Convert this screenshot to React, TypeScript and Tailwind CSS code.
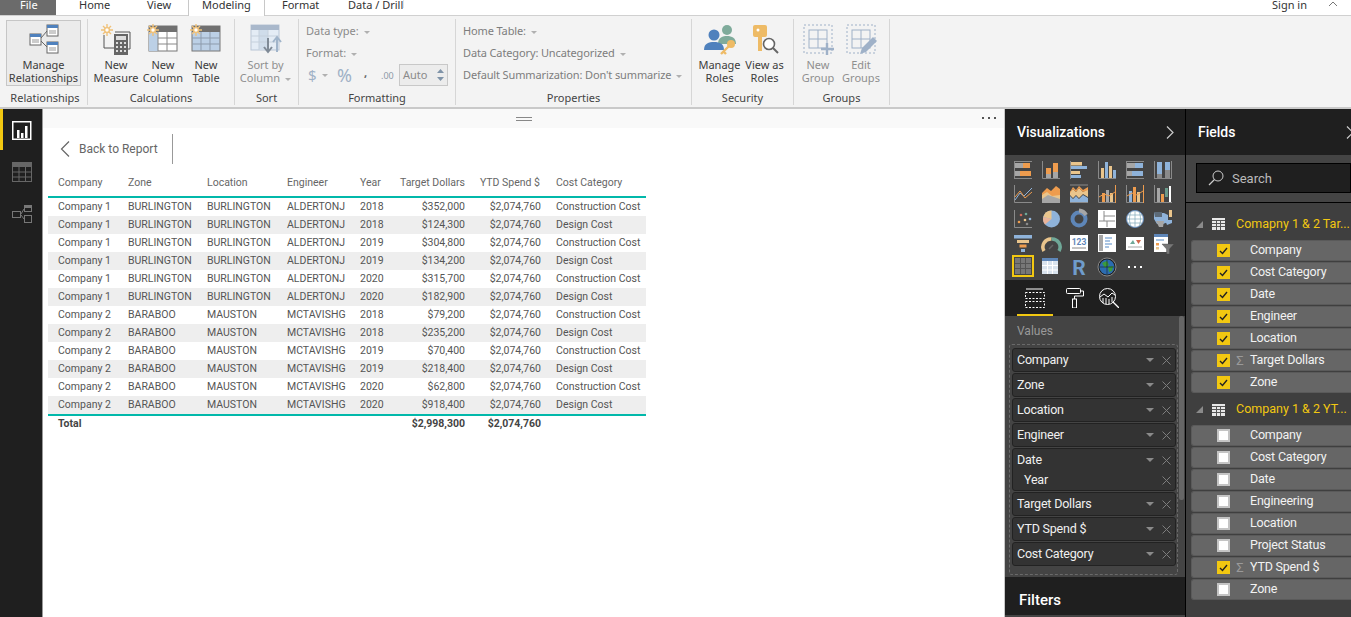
import React from "react";

const sans = "font-['Noto_Sans','Open_Sans',sans-serif]";
const din = "font-['Roboto','Noto_Sans',sans-serif]";

type Row = [string, string, string, string, string, string, string];
const rows: Row[] = [
  ["Company 1", "BURLINGTON", "BURLINGTON", "ALDERTONJ", "2018", "$352,000", "Construction Cost"],
  ["Company 1", "BURLINGTON", "BURLINGTON", "ALDERTONJ", "2018", "$124,300", "Design Cost"],
  ["Company 1", "BURLINGTON", "BURLINGTON", "ALDERTONJ", "2019", "$304,800", "Construction Cost"],
  ["Company 1", "BURLINGTON", "BURLINGTON", "ALDERTONJ", "2019", "$134,200", "Design Cost"],
  ["Company 1", "BURLINGTON", "BURLINGTON", "ALDERTONJ", "2020", "$315,700", "Construction Cost"],
  ["Company 1", "BURLINGTON", "BURLINGTON", "ALDERTONJ", "2020", "$182,900", "Design Cost"],
  ["Company 2", "BARABOO", "MAUSTON", "MCTAVISHG", "2018", "$79,200", "Construction Cost"],
  ["Company 2", "BARABOO", "MAUSTON", "MCTAVISHG", "2018", "$235,200", "Design Cost"],
  ["Company 2", "BARABOO", "MAUSTON", "MCTAVISHG", "2019", "$70,400", "Construction Cost"],
  ["Company 2", "BARABOO", "MAUSTON", "MCTAVISHG", "2019", "$218,400", "Design Cost"],
  ["Company 2", "BARABOO", "MAUSTON", "MCTAVISHG", "2020", "$62,800", "Construction Cost"],
  ["Company 2", "BARABOO", "MAUSTON", "MCTAVISHG", "2020", "$918,400", "Design Cost"],
];

const gridCols = "grid grid-cols-[80px_79px_80px_73px_30px_75px_76px_105px]";

const O = "#ee9c4e", B = "#8fb3da", T = "#eac58c", G = "#a6a6a6", L = "#8a8a8a", W = "#ffffff", D = "#5e86b8";

const Axis = () => <path d="M.5 0V17.5H18" fill="none" stroke={L} />;

const vizIcons: React.ReactNode[] = [
  <><path d="M.5 0V18M0 .5H18M0 17.5H18" stroke={L} fill="none"/><rect x="1" y="2" width="8" height="5" fill={G}/><rect x="9" y="2" width="7" height="5" fill={O}/><rect x="1" y="10" width="5" height="5" fill={G}/><rect x="6" y="10" width="11" height="5" fill={O}/></>,
  <><Axis/><rect x="4" y="7" width="5" height="6" fill={O}/><rect x="4" y="13" width="5" height="4" fill={G}/><rect x="11" y="2" width="5" height="9" fill={O}/><rect x="11" y="11" width="5" height="6" fill={G}/></>,
  <><path d="M.5 0V18" stroke={L}/><rect x="1" y="1" width="11" height="3.5" fill={T}/><rect x="1" y="5" width="16" height="3" fill={B}/><rect x="1" y="10" width="9" height="3" fill={T}/><rect x="1" y="14" width="10" height="3" fill={B}/></>,
  <><Axis/><rect x="3" y="7" width="3" height="10" fill={T}/><rect x="7" y="1" width="3" height="16" fill={B}/><rect x="11" y="5" width="3" height="12" fill={T}/><rect x="15" y="9" width="3" height="8" fill={B}/></>,
  <><path d="M.5 0V18M0 17.5H18M0 .5H18" stroke={L} fill="none"/><rect x="1" y="2" width="8" height="5" fill={G}/><rect x="9" y="2" width="8" height="5" fill={B}/><rect x="1" y="10" width="5" height="5" fill={G}/><rect x="6" y="10" width="11" height="5" fill={B}/></>,
  <><path d="M.5 0V18M0 17.5H18M17.5 0V18" stroke={L} fill="none"/><rect x="3" y="1" width="5" height="12" fill={B}/><rect x="3" y="13" width="5" height="4" fill={L}/><rect x="11" y="1" width="5" height="8" fill={B}/><rect x="11" y="9" width="5" height="8" fill={L}/></>,

  <><Axis/><path d="M1 15L6 8L10 11L18 3" fill="none" stroke={B}/><path d="M1 12L6 6L11 13L18 7" fill="none" stroke={O}/></>,
  <><path d="M0 8L5 3L9 6L14 1L18 4V18H0Z" fill={O}/><path d="M0 10L5 7L10 11L18 10V18H0Z" fill={T}/><path d="M0 14L6 10L18 14V18H0Z" fill={G}/></>,
  <><path d="M0 0H18" stroke={L}/><path d="M0 7L3 4L6 7L9 3L13 7L18 4V12L13 9L9 13L6 10L3 13L0 10Z" fill={T}/><path d="M0 11L3 14L6 11L9 14L13 10L18 13V18H0Z" fill={B}/><path d="M0 7L3 2L6 5L9 1L13 5L18 2V5L13 7L9 3L6 7L3 4L0 8Z" fill={O}/><path d="M0 17.5H18" stroke={L}/></>,
  <><Axis/><rect x="4" y="8" width="3" height="9" fill={O}/><rect x="8" y="5" width="3" height="12" fill={G}/><rect x="12" y="8" width="3" height="9" fill={T}/><path d="M17.5 0V18" stroke={O}/><path d="M1 12L6 9L11 11L17 7" fill="none" stroke={O}/></>,
  <><Axis/><rect x="3" y="6" width="3" height="11" fill={B}/><rect x="7" y="2" width="3" height="15" fill={O}/><rect x="11" y="7" width="3" height="10" fill={T}/><path d="M17.5 0V18" stroke={O}/><path d="M1 11L6 8L11 10L17 6" fill="none" stroke={O}/></>,
  <><Axis/><rect x="3" y="3" width="3" height="14" fill={G}/><rect x="7" y="9" width="3" height="8" fill={O}/><rect x="11" y="3" width="3" height="9" fill="#6a9a8a"/><rect x="15" y="1" width="2" height="16" fill={W}/></>,

  <><Axis/><circle cx="5" cy="12" r="1.3" fill={O}/><circle cx="7" cy="5" r="1.3" fill="#d06a5a"/><circle cx="12" cy="4" r="1.3" fill="#6fa898"/><circle cx="11" cy="10" r="1.3" fill={T}/><circle cx="16" cy="9" r="1.3" fill={B}/><circle cx="13" cy="14" r="1.3" fill={L}/></>,
  <><circle cx="9.5" cy="9" r="8.5" fill={B}/><path d="M9.5 9V.5A8.5 8.5 0 0 0 1.3 7Z" fill={T}/><path d="M9.5 9L1.3 7A8.5 8.5 0 0 0 3 14.5Z" fill="#eab49a"/></>,
  <><circle cx="9" cy="9" r="6.5" fill="none" stroke={D} strokeWidth="4"/><path d="M9 .5A8.5 8.5 0 0 1 16 5" fill="none" stroke={G} strokeWidth="4"/></>,
  <><rect x="0" y="0" width="18" height="18" fill={W}/><path d="M1 11H17M6 1V11M9 17V11M6 6H17" stroke={L} fill="none"/></>,
  <><circle cx="9" cy="9" r="8.5" fill={W} stroke={D}/><path d="M.5 9H17.5M2 5H16M2 13H16M9 .5V17.5M5 2C3 6 3 12 5 16M13 2C15 6 15 12 13 16" stroke="#7fa8b8" fill="none" strokeWidth=".7"/></>,
  <><path d="M0 3H10L14 5V12L9 14H3L0 9Z" fill={B}/><path d="M0 2H8V7H1Z" fill="#5c6a78"/><path d="M2 11H10L9 17H5Z" fill={G}/><path d="M11 10H18V13L13 15Z" fill={B}/><rect x="15" y="0" width="3" height="7" fill={T}/></>,

  <><rect x="0" y="1" width="18" height="3.5" fill={B}/><rect x="3" y="6" width="12" height="3" fill={T}/><rect x="5.5" y="10.5" width="7" height="3" fill={O}/><rect x="7" y="15" width="4" height="3" fill={B}/></>,
  <><path d="M2 17A8 8 0 0 1 9.5 5" fill="none" stroke={T} strokeWidth="3.5"/><path d="M9.5 5A8 8 0 0 1 17 17" fill="none" stroke="#6fa898" strokeWidth="3.5"/><path d="M7 15L11 11" stroke="#666" strokeWidth="1.5"/></>,
  <><rect x="0" y="1" width="18" height="16" fill={W}/><text x="9" y="11" textAnchor="middle" fontSize="8.5" fontFamily="Roboto" fontWeight="700" fill={D}>123</text><path d="M2 14H16" stroke={L}/></>,
  <><rect x="0" y="0" width="18" height="18" fill={W}/><rect x="1" y="1" width="4" height="16" fill={G}/><path d="M7 4H14M7 7H12M7 10H14M7 13H11" stroke={B} strokeWidth="1.3"/></>,
  <><rect x="0" y="3" width="18" height="13" fill={W}/><path d="M4 10L7 6L9 10Z" fill="#6fa898"/><path d="M10 6H15L12.5 10Z" fill="#d0664a"/><path d="M2 13H16" stroke={G}/></>,
  <><rect x="0" y="0" width="14" height="18" fill={W}/><rect x="0" y="0" width="14" height="3" fill={D}/><path d="M2 6H10" stroke={B} strokeWidth="1.5"/><rect x="2" y="9" width="3" height="2.5" fill={O}/><rect x="2" y="13" width="3" height="2.5" fill={T}/><path d="M8 10H20L15.5 15V20H12.5V15Z" fill="#777" stroke="#444" strokeWidth=".4"/></>,

  <><rect x="0" y="0" width="18" height="18" fill="#444"/><rect x="1" y="1" width="16" height="16" fill="#777"/><path d="M6.5 1V17M11.5 1V17M1 6.5H17M1 11.5H17" stroke="#555"/></>,
  <><rect x="0" y="0" width="16" height="16" fill="#d9e3ee"/><rect x="0" y="0" width="16" height="3" fill={D}/><path d="M5.5 3V16M10.5 3V16M0 7.5H16M0 12H16" stroke={W}/></>,
  <text x="9" y="17" textAnchor="middle" fontSize="21" fontFamily="Roboto" fontWeight="700" fill="#6f9ccb">R</text>,
  <><circle cx="9" cy="9" r="9" fill="#1f1f1f" stroke="#888"/><circle cx="9" cy="9" r="7.5" fill="#2c6cb0"/><path d="M4 5L9 3L11 7L7 10Z" fill="#3a9b3e"/><path d="M10 9L15 8L14 13L11 14Z" fill="#3a9b3e"/><path d="M2 9H16M9 2V16" stroke="#111" strokeWidth=".5"/></>,
  <><rect x="2" y="8" width="2" height="2" fill={W}/><rect x="8" y="8" width="2" height="2" fill={W}/><rect x="14" y="8" width="2" height="2" fill={W}/></>,
];

function Caret({ color = "#b0b0b0" }: { color?: string }) {
  return <span className="inline-block ml-[5px] w-0 h-0 align-middle border-x-[3px] border-x-transparent border-t-[3px]" style={{ borderTopColor: color }} />;
}

function Sun() {
  return (
    <g stroke="#f0c27a" strokeWidth="1.4">
      <path d="M6 0V12M0 6H12M2 2L10 10M10 2L2 10" />
      <circle cx="6" cy="6" r="2.4" fill="#fff" stroke="#f0c27a" />
    </g>
  );
}

function RibbonBtn({ lines, muted, children, w }: { lines: React.ReactNode[]; muted?: boolean; children: React.ReactNode; w: string }) {
  return (
    <div className={`${w} flex flex-col items-center shrink-0`}>
      <div className="h-[34px] flex items-start justify-center">{children}</div>
      <div className={`text-[11px] leading-[13px] text-center whitespace-nowrap ${muted ? "text-[#8f8f8f]" : "text-[#3c3c3c]"}`}>
        {lines.map((l, i) => <div key={i}>{l}</div>)}
      </div>
    </div>
  );
}

function Section({ w, label, children, className = "" }: { w: string; label: string; children: React.ReactNode; className?: string }) {
  return (
    <div className={`${w} shrink-0 h-[86px] mt-[3px] border-r border-[#d6d6d6] flex flex-col`}>
      <div className={`flex-1 min-h-0 ${className}`}>{children}</div>
      <div className="h-[19px] pt-[5px] text-center text-[11px] leading-[13px] text-[#444]">{label}</div>
    </div>
  );
}

function PillX() {
  return <svg width="9" height="9" viewBox="0 0 9 9" className="mr-[1px] shrink-0"><path d="M.5.5L8.5 8.5M8.5.5L.5 8.5" stroke="#7d7d7d" /></svg>;
}

function Pill({ label, sub }: { label: string; sub?: string }) {
  return (
    <div className={`ml-[2px] mr-[1px] border border-[#222] rounded-[3px] bg-[#333] ${din}`}>
      <div className="h-[22px] pl-[4px] pr-[3px] flex items-center text-[12.5px] tracking-[-0.2px] text-[#f0f0f0]">
        <span className="flex-1">{label}</span>
        <span className="w-0 h-0 border-x-[4px] border-x-transparent border-t-[4px] border-t-[#8a8a8a] mr-[8px]" />
        <PillX />
      </div>
      {sub && (
        <div className="h-[19px] pl-[11px] pr-[3px] flex items-center text-[12.5px] tracking-[-0.2px] text-[#f0f0f0]">
          <span className="flex-1">{sub}</span>
          <PillX />
        </div>
      )}
    </div>
  );
}

function FieldRow({ label, checked, sigma }: { label: string; checked?: boolean; sigma?: boolean }) {
  return (
    <div className={`h-[21px] mb-px ml-[5px] flex items-center rounded-l-[3px] bg-[#666] border border-[#5a5a5a] border-r-0 ${din}`}>
      {checked ? (
        <span className="ml-[25px] w-[13px] h-[13px] bg-[#f2c811] flex items-center justify-center shrink-0">
          <svg width="9" height="8" viewBox="0 0 9 8"><path d="M1 4L3.5 6.5L8 1" fill="none" stroke="#222" strokeWidth="1.4" /></svg>
        </span>
      ) : (
        <span className="ml-[25px] w-[13px] h-[13px] bg-white border-2 border-[#c4c4c4] shrink-0" />
      )}
      <span className="w-[20px] text-center text-[13px] leading-none text-[#9a9a9a] shrink-0">{sigma ? "Σ" : ""}</span>
      <span className="text-[12.5px] tracking-[-0.2px] text-[#f2f2f2] whitespace-nowrap">{label}</span>
    </div>
  );
}

function GroupHead({ label, h }: { label: string; h: string }) {
  return (
    <div className={`${h} flex items-center pl-[10px] ${din}`}>
      <svg width="7" height="7" viewBox="0 0 7 7"><path d="M7 0V7H0Z" fill="#8a8a8a" /></svg>
      <svg width="13" height="12" viewBox="0 0 13 12" className="ml-[9px]">
        <rect width="13" height="12" fill="#e8e8e8" />
        <path d="M4.5 2V12M8.5 2V12M0 2.5H13M0 5.5H13M0 8.5H13" stroke="#555" />
      </svg>
      <span className="ml-[11px] text-[12.5px] text-[#f2c811] whitespace-nowrap">{label}</span>
    </div>
  );
}

export default function App() {
  return (
    <div className={`w-[1351px] h-[617px] overflow-hidden bg-white flex flex-col ${sans}`}>
      {/* Tabs */}
      <div className="h-[15px] shrink-0 flex items-start bg-white text-[11px] leading-[9px] text-[#333] relative whitespace-nowrap">
        <div className="w-[56px] h-[15px] bg-[#6b6b6b] text-white pl-[20px]">File</div>
        <div className="w-[66px] pl-[23px]">Home</div>
        <div className="w-[66px] pl-[25px]">View</div>
        <div className="w-[77px] h-[16px] pl-[13px] border-x border-[#c8c8c8] bg-white relative z-10">Modeling</div>
        <div className="w-[64px] pl-[17px]">Format</div>
        <div className="w-[75px] pl-[19px] border-r border-[#e4e4e4] h-[8px]">Data / Drill</div>
        <div className="flex-1" />
        <div className="pr-[21px]">Sign in</div>
        <svg width="10" height="6" viewBox="0 0 10 6" className="mr-[13px] mt-px"><path d="M1 5L5 1L9 5" fill="none" stroke="#777" /></svg>
      </div>

      {/* Ribbon */}
      <div className="h-[94px] shrink-0 bg-[#f3f3f3] border-t border-[#d0d0d0] border-b-2 border-b-[#c9c9c9] flex pl-[3px]">
        <Section w="w-[85px]" label="Relationships">
          <div className="mx-[3px] mt-px w-[75px] h-[66px] border border-[#c6c6c6] bg-[#ebebeb] flex flex-col items-center text-[11px] leading-[13px] text-[#3c3c3c] pt-[3px]">
            <svg width="30" height="30" viewBox="0 0 30 30" className="mb-[4px]">
              <rect x="18" y="1" width="11" height="11" fill="#fff" stroke="#666"/><rect x="18" y="1" width="11" height="3" fill="#4f81bd"/>
              <rect x="1" y="10" width="11" height="11" fill="#fff" stroke="#666"/><rect x="1" y="10" width="11" height="3" fill="#4f81bd"/>
              <rect x="18" y="18" width="11" height="11" fill="#fff" stroke="#666"/><rect x="18" y="18" width="11" height="3" fill="#4f81bd"/>
              <path d="M12 14L18 7M12 17L18 23" stroke="#666" fill="none"/>
              <path d="M3 16H10M3 18H10M20 7H27M20 9H27M20 24H27M20 26H27" stroke="#999"/>
            </svg>
            <div>Manage</div><div>Relationships</div>
          </div>
        </Section>

        <Section w="w-[147px]" label="Calculations" className="flex pl-[5px] pt-[5px]">
          <RibbonBtn w="w-[46px]" lines={["New", "Measure"]}>
            <svg width="32" height="32" viewBox="0 0 32 32" overflow="visible">
              <path d="M4 11V24H14M15 8H30V25H27" fill="none" stroke="#555"/>
              <rect x="14" y="10" width="14" height="21" fill="#666"/><rect x="16" y="12" width="10" height="4" fill="#ddd"/>
              <path d="M16 19H26M16 23H26M16 27H26" stroke="#ddd" strokeWidth="2" strokeDasharray="2 2"/>
              <g transform="translate(1 0)"><Sun/></g>
            </svg>
          </RibbonBtn>
          <RibbonBtn w="w-[48px]" lines={["New", "Column"]}>
            <svg width="32" height="30" viewBox="0 0 32 30" overflow="visible">
              <rect x="2" y="2" width="28" height="25" fill="#fff" stroke="#777"/>
              <rect x="2" y="2" width="28" height="6" fill="#707070"/>
              <rect x="2" y="8" width="9" height="19" fill="#bcd0e6"/>
              <path d="M11 8V27M20 8V27M11 14H30M11 20H30" stroke="#888"/>
              <g transform="translate(0 0)"><Sun/></g>
            </svg>
          </RibbonBtn>
          <RibbonBtn w="w-[38px]" lines={["New", "Table"]}>
            <svg width="32" height="30" viewBox="0 0 32 30" overflow="visible">
              <rect x="2" y="2" width="28" height="25" fill="#bcd0e6" stroke="#777"/>
              <rect x="2" y="2" width="28" height="6" fill="#707070"/>
              <path d="M11 8V27M20 8V27M2 14H30M2 20H30" stroke="#8d9bac"/>
              <g transform="translate(0 0)"><Sun/></g>
            </svg>
          </RibbonBtn>
        </Section>

        <Section w="w-[64px]" label="Sort" className="flex justify-center pt-[5px] pr-[2px]">
          <RibbonBtn w="w-[60px]" muted lines={["Sort by", <>Column<Caret/></>]}>
            <svg width="32" height="30" viewBox="0 0 32 30">
              <rect x="1" y="1" width="28" height="25" fill="#e4ecf5" stroke="#b9c6d6"/>
              <rect x="1" y="1" width="28" height="5" fill="#a9b8cb"/>
              <rect x="9" y="6" width="9" height="20" fill="#cfdcea"/>
              <path d="M9 6V26M18 6V26M1 12H29M1 18H29" stroke="#c5d0dc"/>
              <path d="M18 14V27M14 23L18 28L22 23" fill="none" stroke="#7f8a96" strokeWidth="2"/>
              <path d="M27 28V14M23 18L27 13L31 18" fill="none" stroke="#a0b4ca" strokeWidth="2"/>
            </svg>
          </RibbonBtn>
        </Section>

        <Section w="w-[157px]" label="Formatting" className="pl-[7px] text-[11px] text-[#8a8a8a]">
          <div className="h-[22px] pt-[4px] leading-[16px]">Data type:<Caret/></div>
          <div className="h-[22px] pt-[4px] leading-[16px]">Format:<Caret/></div>
          <div className="h-[22px] mt-px flex items-center">
            <span className="text-[15px] ml-[2px] w-[11px] text-[#9fb1c6]">$</span>
            <span className="ml-[3px] w-0 h-0 border-x-[3px] border-x-transparent border-t-[3px] border-t-[#b0b0b0]" />
            <span className="ml-[9px] text-[18px] leading-none text-[#9fb1c6] w-[16px]">%</span>
            <span className="ml-[11px] font-bold text-[#666] w-[6px] mb-[4px]">,</span>
            <span className="ml-[11px] text-[9px] leading-none w-[16px] text-[#8e9aa8]">.00</span>
            <div className="ml-[2px] w-[49px] h-[22px] border border-[#c8c8c8] bg-[#ececec] flex items-center pl-[3px] justify-between pr-[3px]">
              <span>Auto</span>
              <svg width="7" height="14" viewBox="0 0 7 14"><path d="M0 5L3.5 1L7 5ZM0 9L3.5 13L7 9Z" fill="#7f93a8"/></svg>
            </div>
          </div>
        </Section>

        <Section w="w-[236px]" label="Properties" className="pl-[7px] text-[11px] tracking-[-0.13px] text-[#7d7d7d]">
          <div className="h-[22px] pt-[4px] leading-[16px]">Home Table:<Caret/></div>
          <div className="h-[22px] pt-[4px] leading-[16px]">Data Category: Uncategorized<Caret/></div>
          <div className="h-[22px] pt-[4px] leading-[16px]">Default Summarization: Don't summarize<Caret/></div>
        </Section>

        <Section w="w-[102px]" label="Security" className="flex pl-[4px] pt-[5px]">
          <RibbonBtn w="w-[47px]" lines={["Manage", "Roles"]}>
            <svg width="34" height="32" viewBox="0 0 34 32">
              <circle cx="24" cy="6" r="5" fill="#7fab9b"/>
              <path d="M15 20C15 13 20 12 24 12C29 12 33 14 33 20Z" fill="#7fab9b"/>
              <circle cx="11" cy="11" r="5.5" fill="#4f81bd"/>
              <path d="M1 26C1 19 6 18 11 18C17 18 21 20 21 26Z" fill="#4f81bd"/>
              <circle cx="28" cy="20" r="4" fill="#eebb66"/>
              <path d="M26 22L18 30M20 27L23 30" stroke="#eebb66" strokeWidth="2.4" fill="none"/>
            </svg>
          </RibbonBtn>
          <RibbonBtn w="w-[43px]" lines={["View as", "Roles"]}>
            <svg width="28" height="32" viewBox="0 0 28 32">
              <rect x="2" y="1" width="14" height="12" rx="2" fill="#eebb66"/>
              <circle cx="7" cy="6" r="1.5" fill="#fff"/>
              <path d="M9 13V27" stroke="#eebb66" strokeWidth="4"/>
              <circle cx="18" cy="20" r="5.5" fill="#fff" stroke="#666" strokeWidth="1.6"/>
              <path d="M22 24L27 29" stroke="#666" strokeWidth="2"/>
            </svg>
          </RibbonBtn>
        </Section>

        <Section w="w-[96px]" label="Groups" className="flex pl-[2px] pt-[5px]">
          <RibbonBtn w="w-[44px]" muted lines={["New", "Group"]}>
            <svg width="32" height="32" viewBox="0 0 32 32">
              <rect x="2" y="1" width="28" height="28" fill="none" stroke="#9fb1c8" strokeDasharray="2 2"/>
              <rect x="7" y="6" width="18" height="18" fill="none" stroke="#9fb1c8"/>
              <path d="M16 6V24M7 15H25" stroke="#9fb1c8"/>
              <path d="M25 19V31M19 25H32" stroke="#9fb1c8" strokeWidth="2.4"/>
            </svg>
          </RibbonBtn>
          <RibbonBtn w="w-[42px]" muted lines={["Edit", "Groups"]}>
            <svg width="32" height="32" viewBox="0 0 32 32">
              <rect x="2" y="1" width="28" height="28" fill="none" stroke="#9fb1c8" strokeDasharray="2 2"/>
              <rect x="7" y="6" width="18" height="18" fill="none" stroke="#9fb1c8"/>
              <path d="M16 6V24M7 15H25" stroke="#9fb1c8"/>
              <path d="M15 30L17 24L28 13L32 17L21 28Z" fill="#9fb1c8"/>
            </svg>
          </RibbonBtn>
        </Section>
      </div>

      {/* Body */}
      <div className="flex-1 min-h-0 flex">
        {/* Rail */}
        <div className="w-[43px] shrink-0 bg-[#1f1f1f] border-r border-[#999] flex flex-col">
          <div className="h-[41px] border-l-[3px] border-[#f2c811] pl-[9px] pt-[12px]">
            <svg width="20" height="19" viewBox="0 0 20 19">
              <rect x=".75" y=".75" width="18" height="17.5" fill="none" stroke="#fff" strokeWidth="1.5"/>
              <path d="M5 17V9H7.5V17ZM9 17V12H11.5V17ZM13 17V5H15.5V17Z" fill="#fff"/>
            </svg>
          </div>
          <div className="pl-[12px] pt-[12px]">
            <svg width="20" height="20" viewBox="0 0 20 20" className="block">
              <rect x=".5" y=".5" width="19" height="19" fill="none" stroke="#666"/>
              <rect x="0" y="0" width="20" height="5" fill="#666"/>
              <path d="M7 5V20M13.5 5V20M0 10H20M0 15H20" stroke="#666"/>
            </svg>
          </div>
          <div className="pl-[12px] pt-[23px]">
            <svg width="20" height="18" viewBox="0 0 20 18" className="block">
              <rect x=".5" y="6.5" width="8" height="6" fill="none" stroke="#777"/>
              <rect x="12.5" y=".5" width="7" height="6" fill="none" stroke="#777"/><rect x="12" y="0" width="8" height="3" fill="#777"/>
              <rect x="12.5" y="10.5" width="7" height="7" fill="none" stroke="#777"/>
              <path d="M9 9L12 4M9 10L12 14" stroke="#777" fill="none"/>
            </svg>
          </div>
        </div>

        {/* Canvas */}
        <div className="flex-1 min-w-0 bg-white border-r border-[#c8c8c8] flex flex-col">
          <div className="h-[19px] shrink-0 bg-[#f9f9f9] relative flex justify-center items-center">
            <div className="w-[16px] h-[4px] border-y border-[#888]" />
            <div className="absolute right-[8px] top-[8px] flex gap-[4px]">
              <span className="w-[2px] h-[2px] bg-[#555]" /><span className="w-[2px] h-[2px] bg-[#555]" /><span className="w-[2px] h-[2px] bg-[#555]" />
            </div>
          </div>
          <div className="h-[35px] mt-[3px] flex items-center pl-[17px] shrink-0">
            <svg width="10" height="16" viewBox="0 0 10 16"><path d="M9 .5L1.5 8L9 15.5" fill="none" stroke="#666" strokeWidth="1.2"/></svg>
            <span className={`ml-[9px] text-[12px] text-[#666] ${din}`}>Back to Report</span>
            <div className="ml-[14px] w-px h-[30px] bg-[#999]" />
          </div>
          <div className={`ml-[5px] w-[598px] mt-[8px] text-[10.5px] text-[#555] ${din}`}>
            <div className={`${gridCols} h-[24px] pb-[4px] items-center border-b-2 border-[#01b8aa] text-[#666]`}>
              <div className="pl-[10px]">Company</div>
              <div>Zone</div>
              <div>Location</div>
              <div>Engineer</div>
              <div>Year</div>
              <div className="text-right whitespace-nowrap">Target Dollars</div>
              <div className="text-right pr-px whitespace-nowrap">YTD Spend $</div>
              <div className="pl-[15px]">Cost Category</div>
            </div>
            {rows.map((r, i) => (
              <div key={i} className={`${gridCols} h-[18px] items-center leading-[18px] ${i % 2 ? "bg-[#eeeeee]" : ""}`}>
                <div className="pl-[10px]">{r[0]}</div>
                <div>{r[1]}</div>
                <div>{r[2]}</div>
                <div>{r[3]}</div>
                <div>{r[4]}</div>
                <div className="text-right">{r[5]}</div>
                <div className="text-right">$2,074,760</div>
                <div className="pl-[15px] whitespace-nowrap">{r[6]}</div>
              </div>
            ))}
            <div className={`${gridCols} h-[17px] items-center border-t-2 border-[#01b8aa] font-bold text-[#444]`}>
              <div className="pl-[10px]">Total</div>
              <div /><div /><div /><div />
              <div className="text-right">$2,998,300</div>
              <div className="text-right">$2,074,760</div>
              <div />
            </div>
          </div>
        </div>

        {/* Visualizations */}
        <div className={`w-[181px] shrink-0 border-r border-black flex flex-col bg-[#1f1f1f] ${din}`}>
          <div className="h-[46px] shrink-0 flex items-center justify-between pl-[12px] pr-[11px]">
            <span className="text-[14px] font-medium text-white">Visualizations</span>
            <svg width="8" height="13" viewBox="0 0 8 13"><path d="M1 .5L7 6.5L1 12.5" fill="none" stroke="#ccc" strokeWidth="1.2"/></svg>
          </div>
          <div className="h-[125px] shrink-0 bg-[#444] pl-[9px] pt-[6px] grid grid-cols-[repeat(6,28px)] auto-rows-[24.3px]">
            {vizIcons.map((ic, i) => (
              <div key={i}>
                <svg width="18" height="18" viewBox="0 0 18 18" overflow="visible" className={i === 24 ? "outline-2 outline-[#f2c811] -mt-px" : ""}>{ic}</svg>
              </div>
            ))}
          </div>
          <div className="h-[36px] shrink-0 flex pl-[12px] gap-[4px]">
            <div className="w-[36px] h-[36px] border-b-2 border-[#f2c811] flex justify-center pt-[8px]">
              <svg width="20" height="20" viewBox="0 0 20 20"><path d="M1 1H18" stroke="#fff"/><rect x=".5" y="4.5" width="19" height="6" fill="none" stroke="#fff" strokeDasharray="2 1.5"/><rect x=".5" y="13.5" width="19" height="6" fill="none" stroke="#fff" strokeDasharray="2 1.5"/></svg>
            </div>
            <div className="w-[36px] flex justify-center pt-[8px]">
              <svg width="18" height="20" viewBox="0 0 18 20"><rect x=".5" y=".5" width="14" height="5" rx="1" fill="none" stroke="#fff"/><path d="M15 3H17.5V8H8.5V11" fill="none" stroke="#fff"/><rect x="6.5" y="11" width="4" height="9" fill="none" stroke="#fff"/></svg>
            </div>
            <div className="w-[24px] flex justify-center pt-[8px]">
              <svg width="20" height="20" viewBox="0 0 20 20"><circle cx="8.5" cy="8.5" r="8" fill="none" stroke="#fff"/><path d="M14 14L20 20" stroke="#fff" strokeWidth="1.3"/><path d="M1 9L5 6L9 9L13 5L16 7" fill="none" stroke="#fff"/><path d="M4 10V15M7 10V16M10 11V16M13 9V14" stroke="#fff"/></svg>
            </div>
          </div>
          <div className="h-[261px] shrink-0 bg-[#444] relative pl-[4px] pr-[7px]">
            <div className="absolute right-[1px] top-0 w-[5px] h-[184px] bg-[#666] rounded-[2px]" />
            <div className="h-[28px] pl-[8px] pt-[2px] flex items-center text-[12px] text-[#999]">Values</div>
            <div className="h-[231px] border border-dashed border-[#6a6a6a] rounded-[3px] pt-[3px] flex flex-col gap-[1px]">
              <Pill label="Company"/><Pill label="Zone"/><Pill label="Location"/><Pill label="Engineer"/>
              <Pill label="Date" sub="Year"/><Pill label="Target Dollars"/><Pill label="YTD Spend $"/><Pill label="Cost Category"/>
            </div>
          </div>
          <div className="flex-1 flex items-center pl-[14px] pt-[8px] text-[15px] font-medium text-white border-b-2 border-[#444]">Filters</div>
        </div>

        {/* Fields */}
        <div className={`w-[165px] shrink-0 flex flex-col bg-[#1f1f1f] overflow-hidden ${din}`}>
          <div className="h-[46px] shrink-0 flex items-center justify-between pl-[12px]">
            <span className="text-[14px] font-medium text-white">Fields</span>
            <svg width="8" height="13" viewBox="0 0 8 13" className="-mr-[3px]"><path d="M1 .5L7 6.5L1 12.5" fill="none" stroke="#ccc" strokeWidth="1.2"/></svg>
          </div>
          <div className="h-[48px] shrink-0 bg-[#444] border-b border-black pl-[10px] pt-[8px]">
            <div className="h-[30px] bg-[#1f1f1f] border border-black flex items-center pl-[11px]">
              <svg width="16" height="16" viewBox="0 0 16 16"><circle cx="10" cy="6" r="5" fill="none" stroke="#ccc"/><path d="M6.5 9.5L1 15" stroke="#ccc" strokeWidth="1.2"/></svg>
              <span className="ml-[8px] mt-px text-[13px] text-[#bbb]">Search</span>
            </div>
          </div>
          <div className="flex-1 bg-[#3f3f3f]">
            <GroupHead h="h-[37px] pt-[5px]" label="Comapny 1 & 2 Tar..." />
            <FieldRow checked label="Company"/><FieldRow checked label="Cost Category"/><FieldRow checked label="Date"/><FieldRow checked label="Engineer"/>
            <FieldRow checked label="Location"/><FieldRow checked sigma label="Target Dollars"/><FieldRow checked label="Zone"/>
            <GroupHead h="h-[31px]" label="Company 1 & 2 YT..." />
            <FieldRow label="Company"/><FieldRow label="Cost Category"/><FieldRow label="Date"/><FieldRow label="Engineering"/>
            <FieldRow label="Location"/><FieldRow label="Project Status"/><FieldRow checked sigma label="YTD Spend $"/><FieldRow label="Zone"/>
          </div>
        </div>
      </div>
    </div>
  );
}
